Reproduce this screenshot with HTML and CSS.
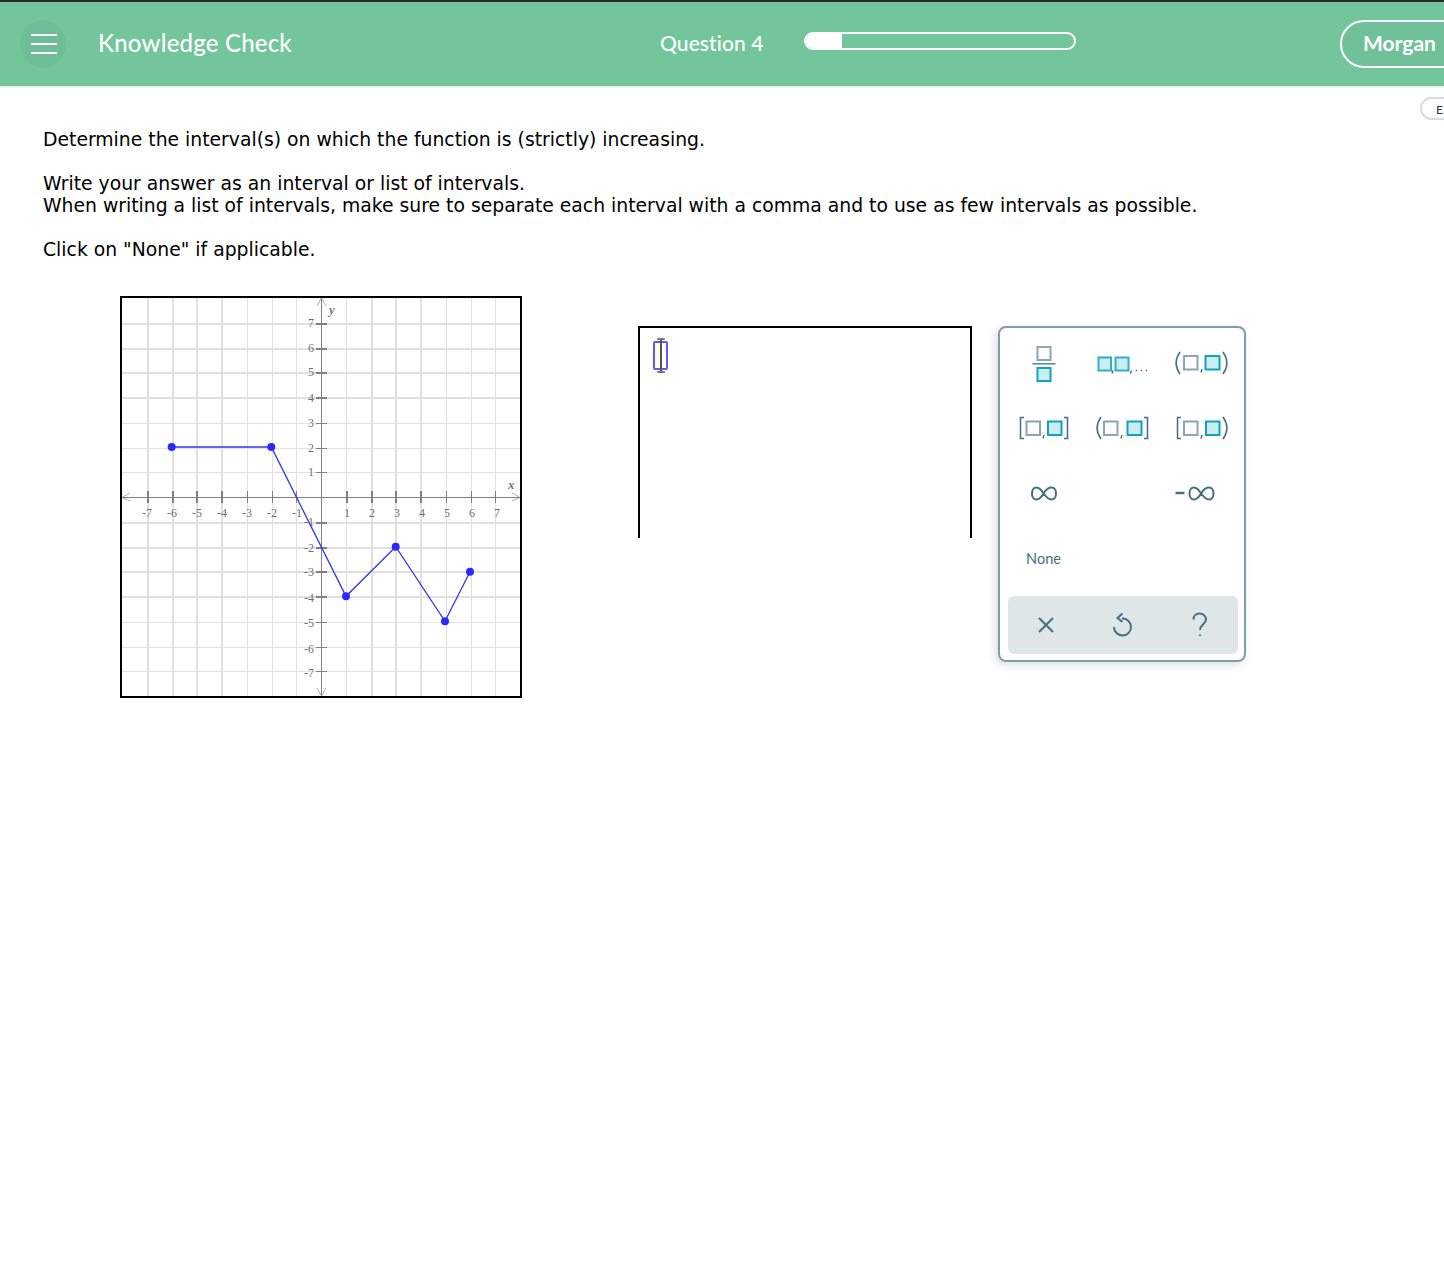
FILE: index.html
```html
<!DOCTYPE html>
<html lang="en">
<head>
<meta charset="utf-8">
<title>Knowledge Check</title>
<link rel="stylesheet" href="styles.css">
</head>
<body>
<header class="topbar">
  <button class="menu" aria-label="Menu"><span></span><span></span><span></span></button>
  <div class="title">Knowledge Check</div>
  <div class="question">Question 4</div>
  <div class="progress"><div class="progress-fill"></div></div>
  <div class="user">Morgan</div>
</header>
<div class="pill-row"><div class="pill">E</div></div>
<p class="prompt">Determine the interval(s) on which the function is (strictly) increasing.<br><br>Write your answer as an interval or list of intervals.<br>When writing a list of intervals, make sure to separate each interval with a comma and to use as few intervals as possible.<br><br>Click on "None" if applicable.</p>
<main class="work">
  <div class="graph">
    <svg class="graph-svg" viewBox="122 298 398 398" width="398" height="398">
      <g class="grid-thick">
        <path d="M148 298V696M173 298V696M197 298V696M222 298V696M372 298V696M396 298V696M421 298V696"/>
        <path d="M122 324H520M122 349H520M122 373H520M122 398H520M122 523H520M122 548H520M122 572H520M122 597H520"/>
      </g>
      <g class="grid-thin">
        <path d="M247.500 298V696M272.500 298V696M296.500 298V696M346.500 298V696M446.500 298V696M471.500 298V696M495.500 298V696"/>
        <path d="M122 423.500H520M122 448.500H520M122 472.500H520M122 622.500H520M122 647.500H520M122 671.500H520"/>
      </g>
      <g class="axis">
        <path d="M122 497.500H520M321.500 298V696"/>
        <path d="M247.500 491V503M272.500 491V503M296.500 491V503M446.500 491V503M471.500 491V503M495.500 491V503"/>
        <path d="M316 423.500H327M316 448.500H327M316 472.500H327M316 622.500H327M316 647.500H327M316 671.500H327"/>
      </g>
      <g class="axis-thick">
        <path d="M148 491V503M173 491V503M197 491V503M222 491V503M346.500 491V503M372 491V503M396 491V503M421 491V503"/>
        <path d="M316 324H327M316 349H327M316 373H327M316 398H327M316 523H327M316 548H327M316 572H327M316 597H327"/>
      </g>
      <path class="arrow" d="M130 493L122 497.500L130 501M317 306L321.500 298L326 306M512 493L520 497.500L512 501M317 688L321.500 696L326 688"/>
      <g class="tick-x">
        <text x="147" y="517">-7</text><text x="172" y="517">-6</text><text x="197" y="517">-5</text><text x="222" y="517">-4</text><text x="247" y="517">-3</text><text x="272" y="517">-2</text><text x="297" y="517">-1</text>
        <text x="347" y="517">1</text><text x="372" y="517">2</text><text x="397" y="517">3</text><text x="422" y="517">4</text><text x="447" y="517">5</text><text x="472" y="517">6</text><text x="497" y="517">7</text>
      </g>
      <g class="tick-y">
        <text x="314" y="327">7</text><text x="314" y="352">6</text><text x="314" y="376">5</text><text x="314" y="402">4</text><text x="314" y="427">3</text><text x="314" y="452">2</text><text x="314" y="476">1</text>
        <text x="314" y="526">-1</text><text x="314" y="552">-2</text><text x="314" y="576">-3</text><text x="314" y="602">-4</text><text x="314" y="627">-5</text><text x="314" y="653">-6</text><text x="314" y="677">-7</text>
      </g>
      <text class="axis-name" x="329" y="314">y</text>
      <text class="axis-name" x="508" y="489">x</text>
      <polyline class="plot" points="171.700,447 271.300,447 346,596.300 395.700,546.700 445,621.300 470,571.700"/>
      <g class="dots">
        <circle cx="171.700" cy="447" r="4"/><circle cx="271.300" cy="447" r="4"/><circle cx="346" cy="596.300" r="4"/><circle cx="395.700" cy="546.700" r="4"/><circle cx="445" cy="621.300" r="4"/><circle cx="470" cy="571.700" r="4"/>
      </g>
    </svg>
  </div>
  <div class="answer">
    <div class="slot"><span class="caret"></span></div>
  </div>
  <div class="keypad">
    <div class="keys">
      <button class="key" aria-label="fraction"><svg class="ic" viewBox="0 0 70 44">
        <rect class="sq" x="28.500" y="6" width="13" height="13"/><path class="rule" d="M23.500 22.800H46.500"/><rect class="sq-on" x="28.500" y="27" width="13" height="13"/>
      </svg></button>
      <button class="key" aria-label="list"><svg class="ic" viewBox="0 0 70 44">
        <rect class="sq-soft" x="10.500" y="16.500" width="12.500" height="13"/><rect class="sq-soft" x="27.500" y="16.500" width="13" height="13"/>
        <path class="tick" d="M25 29.500L24 32.500M43.500 29.500L42.500 32.500"/><path class="ellipsis" d="M47.800 29.500H49.200M52.800 29.500H54.200M57.800 29.500H59.200"/>
      </svg></button>
      <button class="key" aria-label="open interval"><svg class="ic" viewBox="0 0 70 44">
        <path class="fence" d="M13 11C8 18 8 26 13 33"/><rect class="sq" x="17" y="15" width="13.500" height="13.500"/><path class="tick" d="M35 28L34 31.500"/><rect class="sq-on" x="38.500" y="15" width="14" height="13.500"/><path class="fence" d="M56 11C61 18 61 26 56 33"/>
      </svg></button>
      <button class="key" aria-label="closed interval"><svg class="ic" viewBox="0 0 70 44">
        <path class="fence" d="M15 11.500H11.500V32.500H15"/><rect class="sq" x="17.500" y="15.500" width="13.500" height="13.500"/><path class="tick" d="M35 29L34 32.500"/><rect class="sq-on" x="39" y="15.500" width="13.500" height="13.500"/><path class="fence" d="M55 11.500H58.500V32.500H55"/>
      </svg></button>
      <button class="key" aria-label="half-open interval"><svg class="ic" viewBox="0 0 70 44">
        <path class="fence" d="M13 11C8 18 8 26 13 33"/><rect class="sq" x="16" y="15.500" width="13.500" height="13.500"/><path class="tick" d="M34 29L33 32.500"/><rect class="sq-on" x="39.500" y="15.500" width="14" height="13.500"/><path class="fence" d="M56 11.500H59.500V32.500H56"/>
      </svg></button>
      <button class="key" aria-label="half-closed interval"><svg class="ic" viewBox="0 0 70 44">
        <path class="fence" d="M14 11.500H10.500V32.500H14"/><rect class="sq" x="17" y="15.500" width="13.500" height="13.500"/><path class="tick" d="M35 29L34 32.500"/><rect class="sq-on" x="39" y="15.500" width="13.500" height="13.500"/><path class="fence" d="M56 11C61 18 61 26 56 33"/>
      </svg></button>
      <button class="key" aria-label="infinity"><svg class="ic" viewBox="0 0 70 44">
        <path class="inf" d="M35 23C32 18 29.500 16.500 27.500 16.500C24.500 16.500 23 19.500 23 22.500C23 25.500 24.500 28.500 27.500 28.500C29.500 28.500 32 27 35 22C38 17 40.500 16.500 42.500 16.500C45.500 16.500 47 19.500 47 22.500C47 25.500 45.500 28.500 42.500 28.500C40.500 28.500 38 27 35 23Z"/>
      </svg></button>
      <div class="key-empty"></div>
      <button class="key" aria-label="negative infinity"><svg class="ic" viewBox="0 0 70 44">
        <path class="inf-minus" d="M8.500 22H17.500"/>
        <path class="inf" d="M34.500 23C31.500 18 29 16.500 27 16.500C24 16.500 22.500 19.500 22.500 22.500C22.500 25.500 24 28.500 27 28.500C29 28.500 31.500 27 34.500 22C37.500 17 40 16.500 42 16.500C45 16.500 46.500 19.500 46.500 22.500C46.500 25.500 45 28.500 42 28.500C40 28.500 37.500 27 34.500 23Z"/>
      </svg></button>
      <button class="key key-none">None</button>
    </div>
    <div class="actions">
      <button class="act" aria-label="clear"><svg class="act-ic" viewBox="0 0 30 30"><path d="M8 8L22 22M22 8L8 22"/></svg></button>
      <button class="act" aria-label="undo"><svg class="act-ic" viewBox="0 0 30 30"><path d="M14 8.500A8.500 8.500 0 1 1 6 17M14.500 3.500L9.500 8L14.500 12"/></svg></button>
      <button class="act" aria-label="help"><svg class="act-ic" viewBox="0 0 30 30"><path d="M8.500 9.500C8.500 5.500 11.500 3.500 14.500 3.500C18 3.500 21 6 21 9.500C21 14 15 14.500 15 20"/><path class="act-dot" d="M15 24.500V26"/></svg></button>
    </div>
  </div>
</main>
</body>
</html>
```
FILE: styles.css
```css
* { box-sizing: border-box; }
html, body { margin: 0; padding: 0; }
body {
  width: 1444px;
  height: 1270px;
  overflow: hidden;
  background: #fff;
  color: #000;
  font-family: "DejaVu Sans", Verdana, sans-serif;
}
button { font: inherit; border: 0; padding: 0; background: none; color: inherit; }

.topbar {
  display: flex;
  align-items: center;
  height: 88px;
  padding-left: 20px;
  background: #73c69c;
  border-top: 2px solid #2b2b2b;
  border-bottom: 2px solid #eef3f1;
  overflow: hidden;
  color: #fff;
  font-family: Lato, "Open Sans", sans-serif;
}
.menu {
  flex: 0 0 46px;
  height: 48px;
  padding-left: 2px;
  border-radius: 50%;
  background: #6dbe96;
  display: flex;
  flex-direction: column;
  align-items: center;
  justify-content: center;
  gap: 7px;
}
.menu span { display: block; width: 26px; height: 2px; background: #fff; }
.title {
  flex: 0 0 562px;
  margin-right: 32px;
  padding: 0 0 4px 32px;
  font-size: 24px;
  font-weight: 500;
  letter-spacing: .2px;
}
.question { flex: 0 0 144px; padding-bottom: 3px; font-size: 21px; font-weight: 500; letter-spacing: .1px; }
.progress {
  flex: 0 0 272px;
  height: 18px;
  margin-top: -6px;
  border: 2px solid #fff;
  border-radius: 9px;
  overflow: hidden;
}
.progress-fill { width: 36px; height: 100%; background: #fff; }
.user {
  flex: 0 0 140px;
  height: 48px;
  margin-left: 264px;
  padding-left: 21px;
  line-height: 42px;
  border: 2px solid #fff;
  border-radius: 24px;
  background: #70c199;
  font-size: 21px;
  font-weight: 700;
}

.pill-row { display: flex; padding-left: 1420px; margin-top: 9px; overflow: hidden; }
.pill {
  flex: 0 0 40px;
  height: 23px;
  padding-left: 14px;
  line-height: 22px;
  border: 2px solid #d5dee1;
  border-radius: 12px;
  font-size: 12px;
  color: #1c3b47;
  font-family: Lato, sans-serif;
}

.prompt {
  margin: 9px 0 0;
  padding-left: 43px;
  font-size: 18.800px;
  line-height: 22px;
}

.work { display: flex; align-items: flex-start; margin-top: 35px; padding-left: 120px; }
.graph { flex: 0 0 402px; height: 402px; border: 2px solid #000; }
.graph-svg { display: block; }
.grid-thick path { fill: none; stroke: #e0e0e0; stroke-width: 2; shape-rendering: crispEdges; }
.grid-thin path { fill: none; stroke: #e0e0e0; stroke-width: 1; shape-rendering: crispEdges; }
.axis path { fill: none; stroke: #808080; stroke-width: 1; shape-rendering: crispEdges; }
.axis-thick path { fill: none; stroke: #808080; stroke-width: 2; shape-rendering: crispEdges; }
.arrow { fill: none; stroke: #9a9a9a; stroke-width: .8; }
.tick-x text, .tick-y text { font-family: "Liberation Serif", serif; font-size: 12px; fill: #707070; }
.tick-x text { text-anchor: middle; }
.tick-y text { text-anchor: end; }
.axis-name { font-family: "Liberation Serif", serif; font-size: 13px; font-style: italic; font-weight: 700; fill: #777; }
.plot { fill: none; stroke: #3434f4; stroke-width: 1.300; }
.dots circle { fill: #2a2aff; }

.answer {
  flex: 0 0 334px;
  height: 212px;
  margin: 30px 0 0 116px;
  padding: 13px 0 0 13px;
  border: 2px solid #000;
  border-bottom: 0;
}
.slot {
  width: 15px;
  height: 29px;
  border: 2px solid #5a5aff;
  border-radius: 2px;
  display: flex;
  justify-content: center;
}
.caret {
  position: relative;
  width: 2px;
  height: 35px;
  margin-top: -5px;
  flex: none;
  background: #555;
}
.caret::before, .caret::after {
  content: "";
  position: absolute;
  left: -3px;
  width: 8px;
  height: 2px;
  background: #777;
  border-radius: 1px;
}
.caret::before { top: 0; }
.caret::after { bottom: 0; }

.keypad {
  flex: 0 0 248px;
  min-width: 0;
  height: 336px;
  margin: 30px 0 0 26px;
  padding: 2px 6px 6px 8px;
  border: 2px solid #7f9ea7;
  border-radius: 8px;
  background: #fff;
  box-shadow: -3px 3px 8px rgba(60, 90, 100, .18);
}
.keys {
  display: grid;
  grid-template-columns: repeat(3, 79px);
  grid-auto-rows: 65px;
  margin-left: -4px;
}
.key { display: flex; align-items: center; justify-content: center; }
.ic { display: block; width: 70px; height: 44px; }
.sq { fill: #fff; stroke: #8aa6ae; stroke-width: 2; }
.sq-on { fill: #c9edf2; stroke: #12a3bb; stroke-width: 2; }
.sq-soft { fill: #c9edf2; stroke: #2fb0c6; stroke-width: 2; }
.rule { stroke: #5f838e; stroke-width: 1.500; }
.tick { fill: none; stroke: #44707e; stroke-width: 1.400; }
.ellipsis { fill: none; stroke: #44707e; stroke-width: 1.600; }
.fence { fill: none; stroke: #44707e; stroke-width: 1.500; }
.inf { fill: none; stroke: #44707e; stroke-width: 2; }
.inf-minus { fill: none; stroke: #44707e; stroke-width: 2.500; }
.key-none { font-family: Lato, sans-serif; font-size: 14.500px; color: #44707e; padding-top: 1px; }

.actions {
  display: grid;
  grid-template-columns: repeat(3, 1fr);
  height: 58px;
  margin-top: 6px;
  background: #dfe6e8;
  border-radius: 6px;
}
.act { display: flex; align-items: center; justify-content: center; }
.act-ic { display: block; width: 30px; height: 30px; fill: none; stroke: #44707e; stroke-width: 2; }
```
